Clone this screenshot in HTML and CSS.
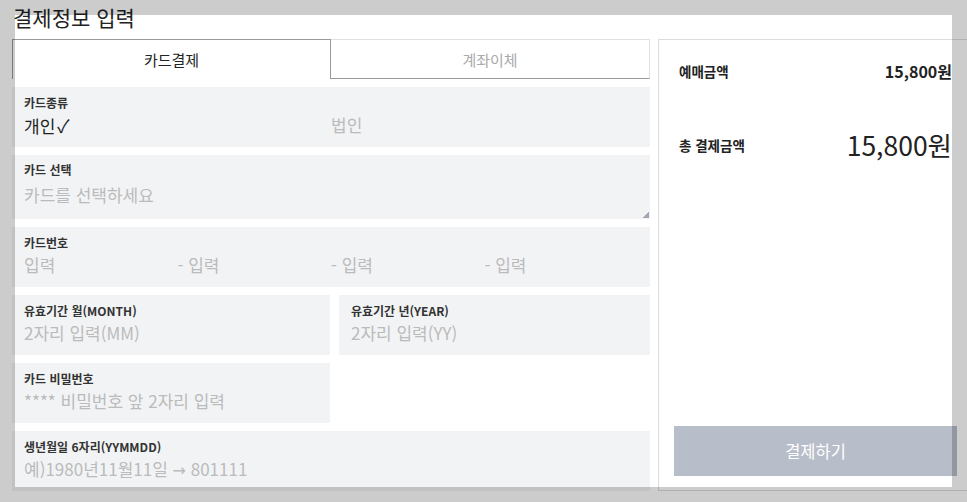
FILE: index.html
```html
<!DOCTYPE html>
<html lang="ko">
<head>
    <meta charset="UTF-8">
    <meta name="viewport" content="width=device-width, initial-scale=1.0">
    <title>결제정보 입력</title>
    <link rel="stylesheet" href="styles.css">
</head>
<body>

<div class="wrap">
    <h2 class="title">결제정보 입력</h2>

    <div class="pay">
        <div class="pay-form">
            <div class="tabs">
                <div class="tab on">카드결제</div>
                <div class="tab">계좌이체</div>
            </div>

            <div class="field">
                <div class="label">카드종류</div>
                <div class="cols2">
                    <span class="val">개인<span class="chk">✓</span></span>
                    <span class="ph">법인</span>
                </div>
            </div>

            <div class="field field-select">
                <div class="label">카드 선택</div>
                <div class="ph">카드를 선택하세요</div>
                <span class="grip"></span>
            </div>

            <div class="field">
                <div class="label">카드번호</div>
                <div class="cols4">
                    <span class="ph">입력</span>
                    <span class="ph">- 입력</span>
                    <span class="ph">- 입력</span>
                    <span class="ph">- 입력</span>
                </div>
            </div>

            <div class="row">
                <div class="field">
                    <div class="label">유효기간 월(MONTH)</div>
                    <div class="ph">2자리 입력(MM)</div>
                </div>
                <div class="field">
                    <div class="label">유효기간 년(YEAR)</div>
                    <div class="ph">2자리 입력(YY)</div>
                </div>
                <div class="field">
                    <div class="label">카드 비밀번호</div>
                    <div class="ph">**** 비밀번호 앞 2자리 입력</div>
                </div>
            </div>

            <div class="field">
                <div class="label">생년월일 6자리(YYMMDD)</div>
                <div class="ph">예)1980년11월11일 <span class="arr">→</span> 801111</div>
            </div>
        </div>

        <div class="summary">
            <div class="sum-row">
                <span class="sum-label">예매금액</span>
                <span class="sum-price">15,800원</span>
            </div>
            <div class="sum-row sum-total">
                <span class="sum-label">총 결제금액</span>
                <span class="sum-big">15,800원</span>
            </div>
            <button class="btn-pay" type="button">결제하기</button>
        </div>
    </div>
</div>

<div class="spot"></div>

</body>
</html>
```

FILE: styles.css
```css
html, body {
    margin: 0;
    padding: 0;
    overflow: hidden;
    background: #fff;
}
body {
    font-family: "Noto Sans CJK KR", "Noto Sans", sans-serif;
    color: #222;
}

.wrap {
    width: 960px;
    padding-left: 12px;
}

.title {
    margin: 0;
    height: 35px;
    padding: 4px 0 0 1px;
    font-size: 21px;
    font-weight: normal;
    line-height: 26px;
    color: #222;
}

.pay { display: flex; gap: 8px; }
.pay-form { width: 638px; display: flex; flex-direction: column; gap: 8px; }

/* tabs */
.tabs { display: flex; height: 40px; }
.tab {
    flex: 1;
    display: flex;
    align-items: center;
    justify-content: center;
    font-size: 15px;
    color: #aaa;
    border: 1px solid #e0e0e0;
    border-bottom-color: #999;
    border-left: none;
}
.tab.on {
    flex: 0 0 319px;
    box-sizing: border-box;
    color: #222;
    border: 1px solid #999;
    border-bottom: none;
}

/* form fields */
.field {
    position: relative;
    height: 60px;
    box-sizing: border-box;
    padding: 8px 12px 0;
    background: #f2f3f5;
}
.field-select { height: 64px; padding-top: 7px; }
.field-select .ph { margin-top: 6px; }
.label {
    font-size: 12px;
    font-weight: bold;
    line-height: 16px;
    color: #333;
}
.val, .ph {
    font-size: 17px;
    line-height: 22px;
    margin-top: 3px;
}
.ph { color: #bbb; }
.val { color: #222; }
.chk { margin-left: 2px; font-size: 18px; }
.arr { font-family: "DejaVu Sans", sans-serif; font-size: 16px; }
.cols2 { display: grid; grid-template-columns: 1fr 1fr; margin-top: 3px; }
.cols4 { display: grid; grid-template-columns: repeat(4, 1fr); margin-top: 3px; }
.cols2 > span, .cols4 > span { margin-top: 0; }

.grip {
    position: absolute;
    right: 1px;
    bottom: 1px;
    width: 7px;
    height: 7px;
    background: linear-gradient(135deg, transparent 50%, #a3a7b3 50%);
}

.row {
    display: grid;
    grid-template-columns: 318px 1fr;
    column-gap: 9px;
    row-gap: 8px;
}

/* right summary */
.summary {
    width: 314px;
    box-sizing: border-box;
    border: 1px solid #ddd;
    padding: 19px 19px 14px 20px;
    display: flex;
    flex-direction: column;
}
.sum-row {
    display: flex;
    justify-content: space-between;
    align-items: center;
}
.sum-label { font-size: 13.5px; font-weight: bold; }
.sum-price { font-size: 16px; font-weight: bold; }
.sum-total { margin-top: 44px; }
.sum-big { font-size: 26.5px; line-height: 36px; }

.btn-pay {
    margin: auto -5px 0 -5px;
    height: 50px;
    border: none;
    background: #b8bdca;
    color: #fff;
    font-family: inherit;
    font-size: 16.5px;
}

/* dimmed overlay around capture area */
.spot {
    position: fixed;
    left: 15px;
    top: 15px;
    width: 937px;
    height: 472px;
    box-shadow: 0 0 0 2000px rgba(0, 0, 0, 0.2);
    pointer-events: none;
}
```
